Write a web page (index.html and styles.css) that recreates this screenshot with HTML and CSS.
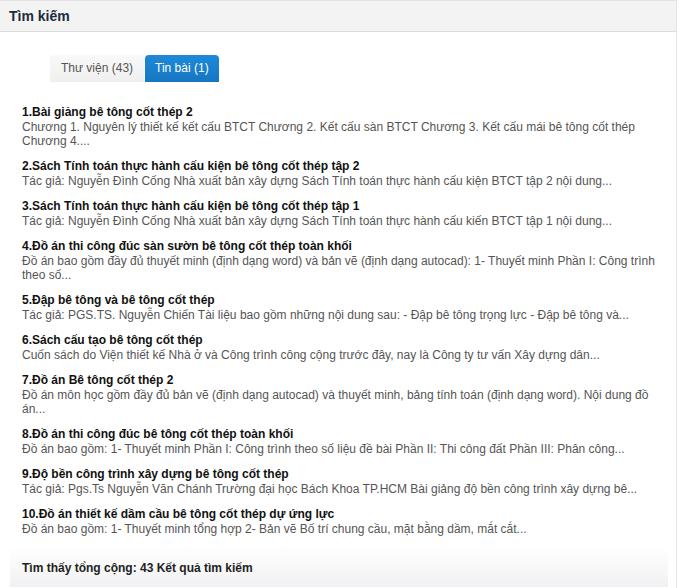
FILE: index.html
```html
<!DOCTYPE html>
<html lang="vi">
<head>
<meta charset="utf-8">
<title>Tìm kiếm</title>
<link rel="stylesheet" href="styles.css">
</head>
<body>
<div class="panel">
  <div class="panel-head">Tìm kiếm</div>
  <div class="panel-body">
    <div class="tabs">
      <span class="tab">Thư viện (43)</span>
      <span class="tab active">Tin bài (1)</span>
    </div>
    <ul class="results">
      <li><div class="t">1.Bài giảng bê tông cốt thép 2</div><div class="d">Chương 1. Nguyên lý thiết kế kết cấu BTCT Chương 2. Kết cấu sàn BTCT Chương 3. Kết cấu mái bê tông cốt thép Chương 4....</div></li>
      <li><div class="t">2.Sách Tính toán thực hành cấu kiện bê tông cốt thép tập 2</div><div class="d">Tác giả: Nguyễn Đình Cống Nhà xuất bản xây dựng Sách Tính toán thực hành cấu kiện BTCT tập 2 nội dung...</div></li>
      <li><div class="t">3.Sách Tính toán thực hành cấu kiện bê tông cốt thép tập 1</div><div class="d">Tác giả: Nguyễn Đình Cống Nhà xuất bản xây dựng Sách Tính toán thực hành cấu kiến BTCT tập 1 nội dung...</div></li>
      <li><div class="t">4.Đồ án thi công đúc sàn sườn bê tông cốt thép toàn khối</div><div class="d">Đồ án bao gồm đầy đủ thuyết minh (định dạng word) và bản vẽ (định dạng autocad): 1- Thuyết minh Phần I: Công trình theo số...</div></li>
      <li><div class="t">5.Đập bê tông và bê tông cốt thép</div><div class="d">Tác giả: PGS.TS. Nguyễn Chiến Tài liệu bao gồm những nội dung sau: - Đập bê tông trọng lực - Đập bê tông và...</div></li>
      <li><div class="t">6.Sách cấu tạo bê tông cốt thép</div><div class="d">Cuốn sách do Viện thiết kế Nhà ở và Công trình công cộng trước đây, nay là Công ty tư vấn Xây dựng dân...</div></li>
      <li><div class="t">7.Đồ án Bê tông cốt thép 2</div><div class="d">Đồ án môn học gồm đầy đủ bản vẽ (định dạng autocad) và thuyết minh, bảng tính toán (định dạng word). Nội dung đồ án...</div></li>
      <li><div class="t">8.Đồ án thi công đúc bê tông cốt thép toàn khối</div><div class="d">Đồ án bao gồm: 1- Thuyết minh Phần I: Công trình theo số liệu đề bài Phần II: Thi công đất Phần III: Phân công...</div></li>
      <li><div class="t">9.Độ bền công trình xây dựng bê tông cốt thép</div><div class="d">Tác giả: Pgs.Ts Nguyễn Văn Chánh Trường đại học Bách Khoa TP.HCM Bài giảng độ bền công trình xây dựng bê...</div></li>
      <li><div class="t">10.Đồ án thiết kế dầm cầu bê tông cốt thép dự ứng lực</div><div class="d">Đồ án bao gồm: 1- Thuyết minh tổng hợp 2- Bản vẽ Bố trí chung cầu, mặt bằng dầm, mắt cắt...</div></li>
    </ul>
    <div class="total">Tìm thấy tổng cộng: 43 Kết quả tìm kiếm</div>
  </div>
</div>
</body>
</html>
```
FILE: styles.css
```css
html, body {
  margin: 0;
  padding: 0;
  background: #fff;
}
body {
  font-family: "Liberation Sans", Arial, sans-serif;
  font-size: 12px;
  color: #333;
}
.panel {
  width: 677px;
  border-right: 1px solid #e3e3e3;
  border-top: 1px solid #e3e3e3;
  box-sizing: border-box;
  height: 588px;
}
.panel-head {
  background: #f3f3f3;
  border-bottom: 1px solid #dcdcdc;
  height: 31px;
  box-sizing: border-box;
  padding: 7px 0 0 9px;
  font-size: 14px;
  font-weight: bold;
  color: #1c2b3b;
  line-height: 16px;
}
.panel-body {
  padding: 23px 0 0 10px;
}
.tabs {
  display: flex;
  margin-left: 40px;
  gap: 1px;
}
.tab {
  display: block;
  height: 27px;
  line-height: 27px;
  padding: 0 11px;
  color: #555;
  background: linear-gradient(#f9f9f9, #efefef);
  border-radius: 4px 4px 0 0;
  font-size: 12px;
}
.tab.active {
  color: #fff;
  background: linear-gradient(#1e8ad8, #1676c2);
  padding: 0 10px;
}
.results {
  list-style: none;
  margin: 23px 0 0 0;
  padding: 0 0 0 12px;
  width: 660px;
  box-sizing: border-box;
}
.results li {
  margin-bottom: 11px;
}
.t {
  font-weight: bold;
  color: #111;
  line-height: 15px;
}
.d {
  color: #555;
  line-height: 14px;
}
.total {
  margin-top: 0;
  padding: 14px 12px 12px;
  width: 658px;
  box-sizing: border-box;
  font-weight: bold;
  color: #222;
  background: linear-gradient(#ffffff, #f1f1f3);
}
```
